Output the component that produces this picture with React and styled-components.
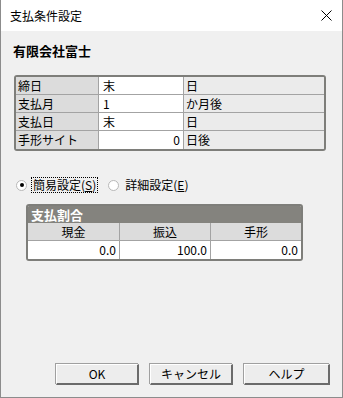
import { styled, createGlobalStyle } from "styled-components";

const Global = createGlobalStyle`
  html, body {
    margin: 0;
    padding: 0;
    background: #f0f0f0;
  }
  body {
    font-family: "Noto Sans CJK JP", "DejaVu Sans", sans-serif;
    font-size: 12px;
    color: #000;
  }
`;

const Window = styled.div`
  width: 343px;
  height: 398px;
  box-sizing: border-box;
  border: 1px solid #8c8c8c;
  border-top: none;
  display: flex;
  flex-direction: column;
  background: #f0f0f0;
`;

const TitleBar = styled.div`
  height: 31px;
  flex-shrink: 0;
  background: #fff;
  display: flex;
  align-items: center;
  justify-content: space-between;
  padding: 0 9px 0 9px;
  font-size: 12px;
  line-height: 1;
`;

const Close = styled.svg`
  width: 11px;
  height: 11px;
  margin-right: 1px;
`;

const Body = styled.div`
  flex: 1;
  display: flex;
  flex-direction: column;
  padding: 11px 18px 12px 12px;
`;

const Company = styled.div`
  font-size: 13px;
  font-weight: bold;
  line-height: 17px;
  height: 17px;
`;

const Table = styled.div`
  margin-top: ${({ $mt }) => $mt}px;
  margin-left: ${({ $ml }) => $ml || 0}px;
  width: ${({ $w }) => $w}px;
  box-sizing: border-box;
  border: 2px solid #7e7e7a;
  border-radius: 3px;
  display: grid;
  grid-template-columns: ${({ $cols }) => $cols};
  overflow: hidden;
`;

const Cell = styled.div`
  height: 18px;
  line-height: 18px;
  box-sizing: border-box;
  border-right: ${({ $last }) => ($last ? "none" : "1px solid #a3a3a3")};
  border-bottom: ${({ $bottom }) => ($bottom ? "none" : "1px solid #a3a3a3")};
  background: ${({ $bg }) => $bg};
  text-align: ${({ $align }) => $align || "left"};
  padding: 0 ${({ $align }) => ($align === "right" ? "3px" : "0")} 0
    ${({ $pl }) => $pl ?? 2}px;
  white-space: nowrap;
  overflow: hidden;
`;

const Header = styled.div`
  grid-column: 1 / -1;
  height: 17px;
  line-height: 17px;
  background: #84837e;
  color: #fff;
  font-weight: bold;
  font-size: 13px;
  padding-left: 3px;
`;

const RadioRow = styled.div`
  margin-top: 26px;
  display: flex;
  align-items: center;
  height: 16px;
`;

const Radio = styled.label`
  display: flex;
  align-items: center;
  gap: 5px;
  margin-left: ${({ $ml }) => $ml}px;
`;

const Dot = styled.span`
  width: 11px;
  height: 11px;
  box-sizing: border-box;
  border-radius: 50%;
  border: 1px solid #b8b8b8;
  background: #fff;
  display: flex;
  align-items: center;
  justify-content: center;
  &::after {
    content: "";
    width: 4px;
    height: 4px;
    border-radius: 50%;
    background: ${({ $on }) => ($on ? "#000" : "transparent")};
  }
`;

const RadioText = styled.span`
  line-height: 14px;
  padding: 0 1px;
  outline: ${({ $focus }) => ($focus ? "1px dotted #000" : "none")};
  outline-offset: 0;
`;

const Spacer = styled.div`
  flex: 1;
`;

const Buttons = styled.div`
  display: flex;
  justify-content: flex-end;
  gap: 11px;
  margin-right: -6px;
`;

const Button = styled.button`
  width: ${({ $w }) => $w}px;
  height: 21px;
  box-sizing: border-box;
  font-family: inherit;
  font-size: 12px;
  color: #000;
  background: #ededed;
  border-style: solid;
  border-width: 1px 2px 2px 1px;
  border-color: #fff #6b6b6b #6b6b6b #fff;
  border-radius: 0;
  box-shadow: -1px -1px 0 #a0a0a0;
  padding: 0;
  line-height: 1;
`;

const rows = [
  ["締日", "末", "日", "left"],
  ["支払月", "1", "か月後", "left"],
  ["支払日", "末", "日", "left"],
  ["手形サイト", "0", "日後", "right"],
];

export default function App() {
  return (
    <>
      <Global />
      <Window>
        <TitleBar>
          <span>支払条件設定</span>
          <Close viewBox="0 0 11 11">
            <path d="M0.5 0.5 L10.5 10.5 M10.5 0.5 L0.5 10.5" stroke="#000" strokeWidth="1" />
          </Close>
        </TitleBar>
        <Body>
          <Company>有限会社富士</Company>
          <Table $mt={16} $ml={1} $w={312} $cols="83px 85px 1fr">
            {rows.map(([label, value, unit, align], i) => {
              const bottom = i === rows.length - 1;
              return [
                <Cell key={label} $bg="#dcdcdc" $bottom={bottom}>{label}</Cell>,
                <Cell key={label + "v"} $bg="#fff" $bottom={bottom} $align={align} $pl={align === "right" ? 0 : 4}>
                  {value}
                </Cell>,
                <Cell key={label + "u"} $bg="#ebebeb" $bottom={bottom} $last>{unit}</Cell>,
              ];
            })}
          </Table>
          <RadioRow>
            <Radio $ml={3}>
              <Dot $on />
              <RadioText $focus>簡易設定(<u>S</u>)</RadioText>
            </Radio>
            <Radio $ml={11}>
              <Dot />
              <RadioText>詳細設定(<u>E</u>)</RadioText>
            </Radio>
          </RadioRow>
          <Table $mt={11} $ml={13} $w={277} $cols="92px 91px 1fr">
            <Header>支払割合</Header>
            <Cell $bg="#dcdcdc" $align="center" $pl={0}>現金</Cell>
            <Cell $bg="#dcdcdc" $align="center" $pl={0}>振込</Cell>
            <Cell $bg="#dcdcdc" $align="center" $pl={0} $last>手形</Cell>
            <Cell $bg="#fff" $align="right" $pl={0} $bottom>0.0</Cell>
            <Cell $bg="#fff" $align="right" $pl={0} $bottom>100.0</Cell>
            <Cell $bg="#fff" $align="right" $pl={0} $bottom $last>0.0</Cell>
          </Table>
          <Spacer />
          <Buttons>
            <Button $w={83}>OK</Button>
            <Button $w={83}>キャンセル</Button>
            <Button $w={86}>ヘルプ</Button>
          </Buttons>
        </Body>
      </Window>
    </>
  );
}
